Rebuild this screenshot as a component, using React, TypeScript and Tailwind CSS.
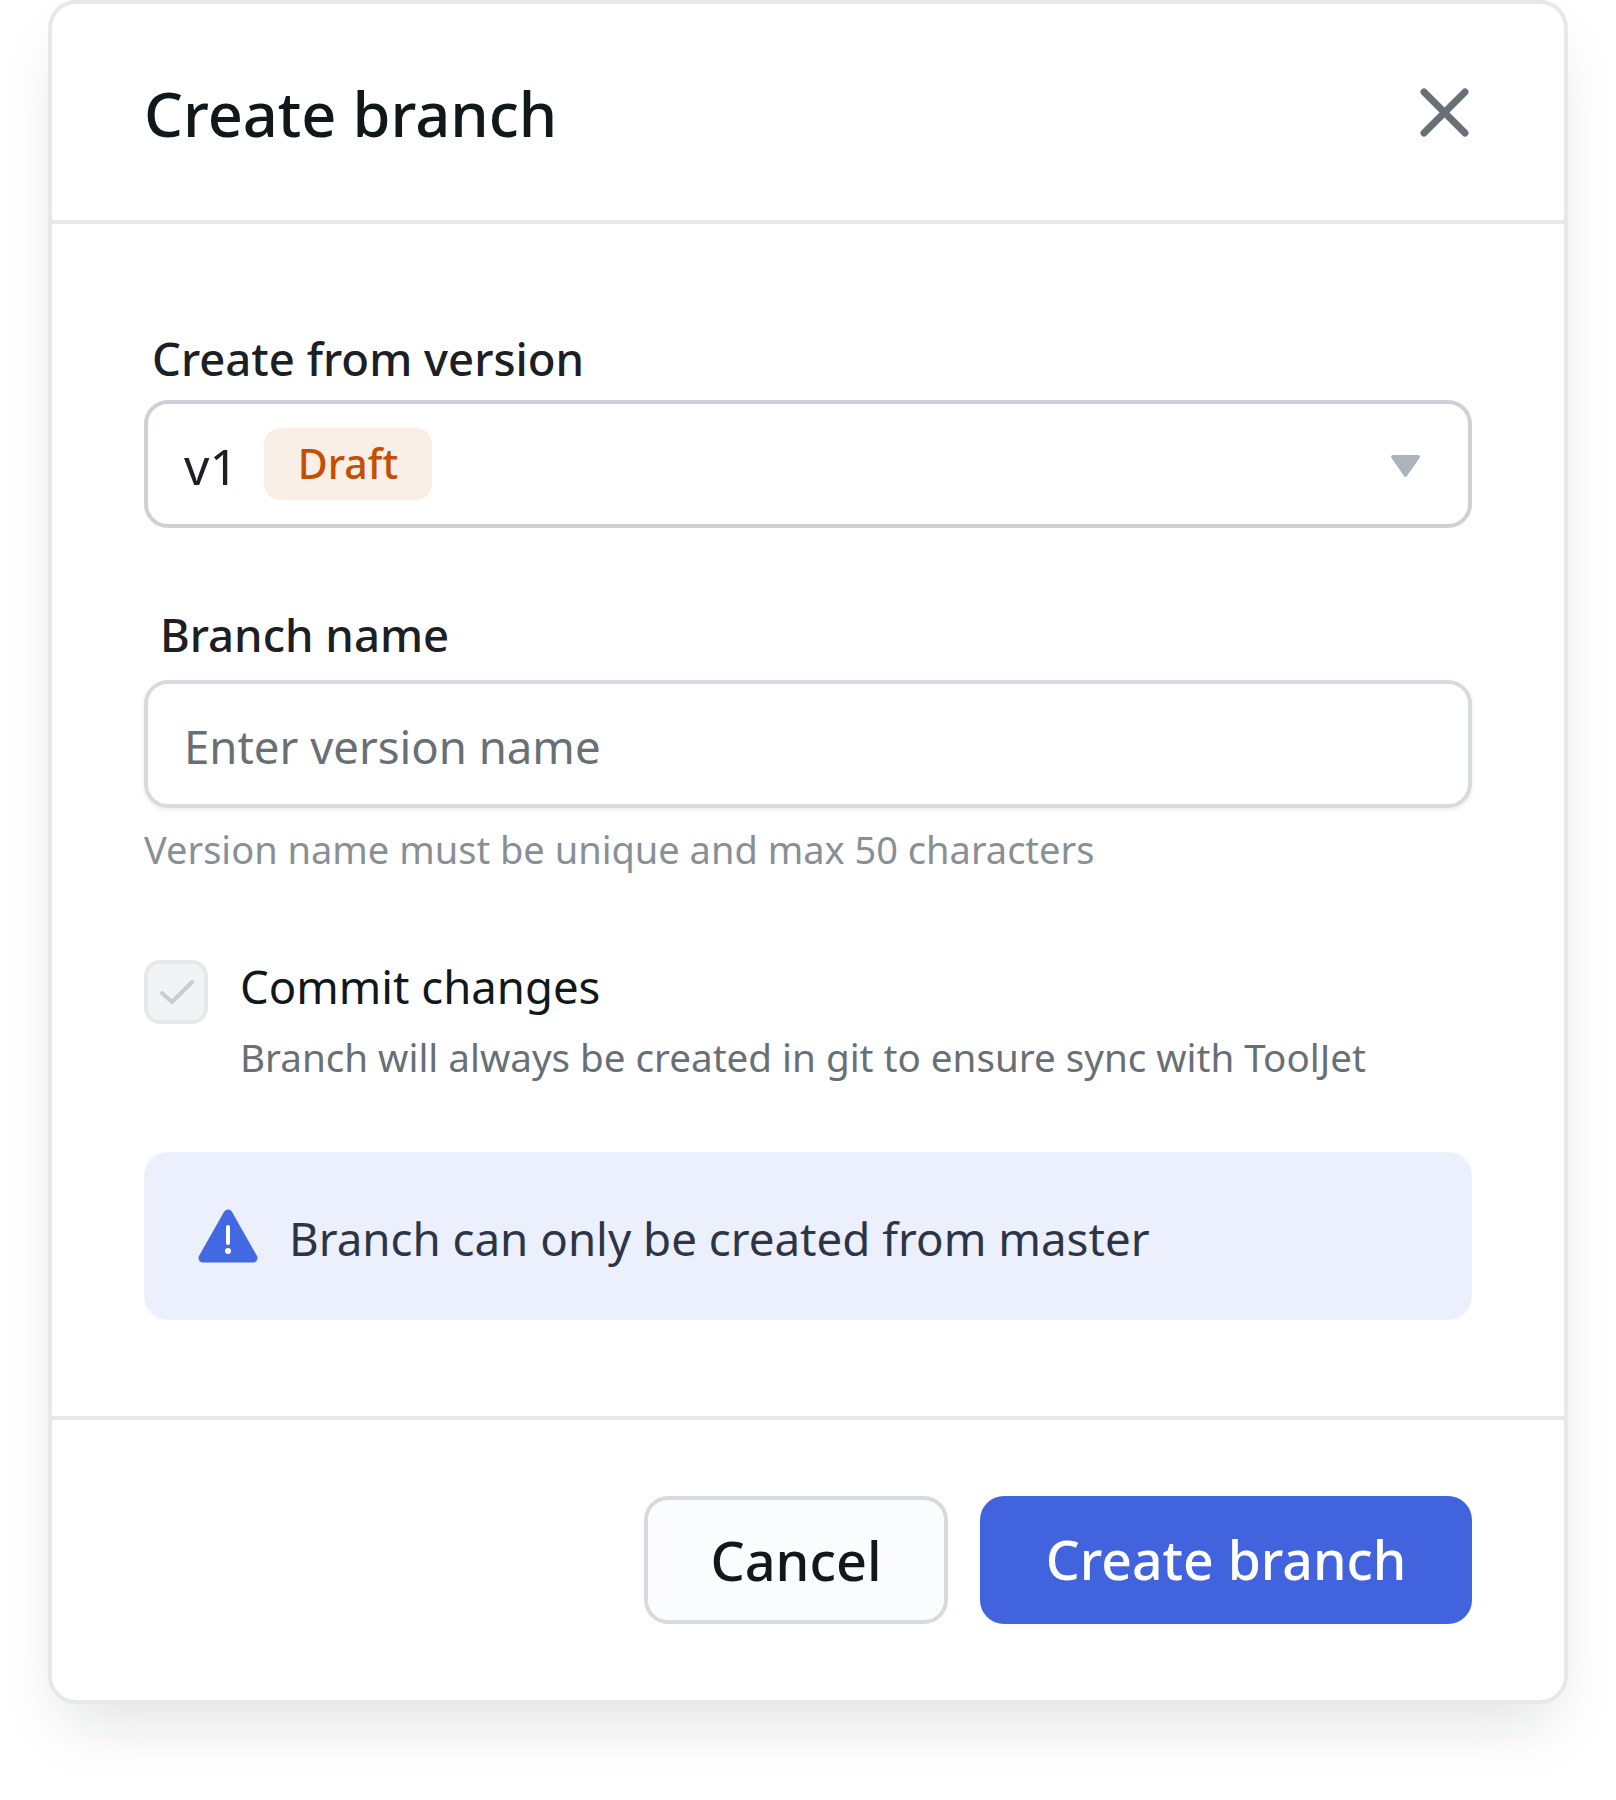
export default function App() {
  return (
    <div className="w-[1616px] h-[1800px] bg-white pl-[48px] overflow-hidden font-['Noto_Sans',sans-serif]">
      <div className="w-[1520px] h-[1704px] flex flex-col bg-white border-4 border-[#E6E8EB] rounded-[28px] shadow-[0_32px_64px_-16px_rgba(16,24,40,0.13)]">
        {/* Header */}
        <div className="h-[220px] shrink-0 flex items-center justify-between pl-[92px] pr-[95px] border-b-4 border-[#E6E8EB]">
          <h1 className="pt-[2px] text-[61.3px] leading-[64px] font-medium text-[#11181C]">Create branch</h1>
          <svg className="w-[49px] h-[49px]" viewBox="0 0 49 49" fill="none" stroke="#687076" strokeWidth="7" strokeLinecap="round">
            <path d="M4 4L45 45M45 4L4 45" />
          </svg>
        </div>

        {/* Body */}
        <div className="flex-1 px-[92px] pt-[112px]">
          <div className="ml-[8px] h-[48px] leading-[44px] text-[45.5px] font-medium text-[#1C2024]">Create from version</div>
          <div className="mt-[16px] h-[128px] flex items-center justify-between pl-[36px] pr-[48px] border-4 border-[#CCD1D5] rounded-[24px]">
            <div className="flex items-center">
              <span className="w-[80px] pt-[4px] text-[50px] leading-[56px] text-[#1C2024]">v1</span>
              <span className="h-[72px] w-[168px] flex items-center justify-center rounded-[16px] bg-[#F9EFE6] text-[41px] font-medium text-[#C54E00]">Draft</span>
            </div>
            <svg className="w-[29px] h-[22px] mt-[4px]" viewBox="0 0 29 22" fill="#ADB3BA">
              <path d="M2 0H27C28.5 0 29.4 1.5 28.7 2.8L15.8 21.2C15.2 22.2 13.8 22.2 13.2 21.2L.3 2.8C-.4 1.5 .5 0 2 0Z" />
            </svg>
          </div>

          <div className="mt-[84px] ml-[16px] h-[48px] leading-[44px] text-[45.5px] font-medium text-[#1C2024]">Branch name</div>
          <div className="mt-[20px] h-[128px] flex items-center pl-[36px] border-4 border-[#D7DBDF] rounded-[24px] shadow-[0_2px_4px_rgba(16,24,40,0.08)]">
            <span className="pt-[4px] text-[45.5px] leading-[56px] text-[#687076]">Enter version name</span>
          </div>
          <div className="mt-[20px] h-[44px] leading-[42px] text-[38px] text-[#889096]">Version name must be unique and max 50 characters</div>

          <div className="mt-[88px] flex gap-[32px]">
            <div className="w-[64px] h-[64px] shrink-0 bg-[#F1F3F5] border-4 border-[#E6E8EB] rounded-[16px]">
              <svg className="w-[56px] h-[56px]" viewBox="0 0 56 56" fill="none" stroke="#C7CDD1" strokeWidth="4" strokeLinecap="round" strokeLinejoin="round">
                <path d="M14 29L24 38L44 18" />
              </svg>
            </div>
            <div>
              <div className="h-[56px] leading-[52px] text-[45.5px] text-[#11181C]">Commit changes</div>
              <div className="mt-[18px] h-[48px] leading-[46px] text-[38.6px] text-[#687076]">Branch will always be created in git to ensure sync with ToolJet</div>
            </div>
          </div>

          <div className="mt-[70px] h-[168px] flex items-center gap-[31px] pl-[54px] bg-[#ECEFFC] rounded-[24px]">
            <svg className="w-[60px] h-[54px] shrink-0" viewBox="0 0 60 54" fill="#4368E3">
              <path d="M30 5L55 49H5Z" stroke="#4368E3" strokeWidth="9" strokeLinejoin="round" />
              <rect x="28" y="16" width="4" height="20" rx="2" fill="#fff" />
              <circle cx="30" cy="42" r="3" fill="#fff" />
            </svg>
            <span className="pt-[4px] text-[45.7px] leading-[56px] text-[#2C3547]">Branch can only be created from master</span>
          </div>
        </div>

        {/* Footer */}
        <div className="h-[284px] shrink-0 flex justify-end gap-[32px] px-[92px] pt-[76px] border-t-4 border-[#E6E8EB]">
          <button className="w-[304px] h-[128px] rounded-[24px] border-4 border-[#D7DBDF] bg-[#FBFCFD] text-[54px] font-medium text-[#11181C]">Cancel</button>
          <button className="w-[492px] h-[128px] rounded-[24px] bg-[#4164DE] text-[53.5px] font-medium text-white">Create branch</button>
        </div>
      </div>
    </div>
  );
}
